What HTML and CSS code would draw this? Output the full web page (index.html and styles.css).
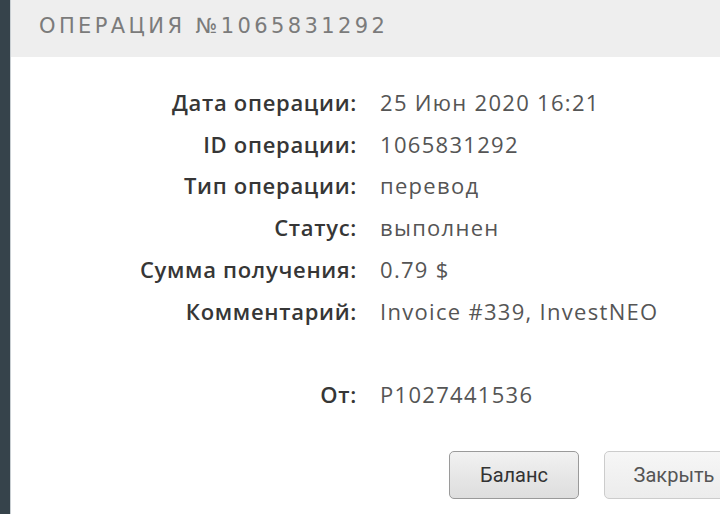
FILE: index.html
```html
<!DOCTYPE html>
<html lang="ru">
<head>
    <meta charset="UTF-8">
    <meta name="viewport" content="width=device-width, initial-scale=1.0">
    <title>Операция №1065831292</title>
    <link rel="stylesheet" href="styles.css">
</head>
<body>
    <div class="page">
        <div class="sidebar"></div>
        <div class="dialog">
            <div class="dialog-header">ОПЕРАЦИЯ №1065831292</div>
            <div class="details">
                <span class="label">Дата операции:</span>
                <span class="value">25 Июн 2020 16:21</span>
                <span class="label">ID операции:</span>
                <span class="value">1065831292</span>
                <span class="label">Тип операции:</span>
                <span class="value">перевод</span>
                <span class="label">Статус:</span>
                <span class="value">выполнен</span>
                <span class="label">Сумма получения:</span>
                <span class="value">0.79 $</span>
                <span class="label">Комментарий:</span>
                <span class="value">Invoice #339, InvestNEO</span>
                <span class="label"></span>
                <span class="value"></span>
                <span class="label">От:</span>
                <span class="value">P1027441536</span>
            </div>
            <div class="buttons">
                <button class="btn btn-balance">Баланс</button>
                <button class="btn btn-close">Закрыть</button>
            </div>
        </div>
    </div>
</body>
</html>
```

FILE: styles.css
```css
body {
    margin: 0;
    padding: 0;
    background-color: #ffffff;
    font-family: "Open Sans", Arial, sans-serif;
    overflow: hidden;
}
.page {
    display: flex;
    height: 514px;
}
.sidebar {
    width: 10px;
    flex-shrink: 0;
    background-color: #36434b;
    border-right: 1px solid #c9cfd3;
}
.dialog {
    flex: 1;
    min-width: 0;
}
.dialog-header {
    height: 57px;
    line-height: 52px;
    padding-left: 28px;
    background-color: #eeeeee;
    color: #7b7b7b;
    font-family: "DejaVu Sans", sans-serif;
    font-size: 21px;
    letter-spacing: 3.4px;
    white-space: nowrap;
}
.details {
    display: grid;
    grid-template-columns: 346px auto;
    grid-auto-rows: 41.8px;
    column-gap: 23px;
    margin-top: 24px;
    font-size: 22px;
    align-items: center;
}
.label {
    text-align: right;
    color: #363636;
    font-weight: 600;
    letter-spacing: 0.7px;
    white-space: nowrap;
}
.value {
    color: #555555;
    letter-spacing: 1.3px;
    white-space: nowrap;
}
.buttons {
    display: flex;
    gap: 25px;
    margin-top: 36px;
    padding-left: 438px;
}
.btn {
    flex-shrink: 0;
    height: 48px;
    padding: 0 20px;
    font-family: Roboto, sans-serif;
    font-size: 20px;
    border-radius: 5px;
    cursor: pointer;
}
.btn-balance {
    width: 130px;
    color: #333333;
    border: 1px solid #9a9a9a;
    background: linear-gradient(#f2f2f2, #e6e6e6 55%, #dedede);
}
.btn-close {
    width: 140px;
    color: #555555;
    border: 1px solid #cccccc;
    background: linear-gradient(#f6f6f6, #ececec);
}
```
